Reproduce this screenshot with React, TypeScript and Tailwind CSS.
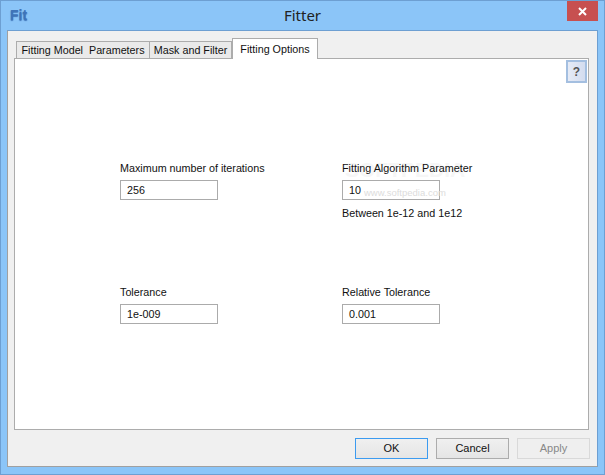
const font = { fontFamily: '"Liberation Sans", Arial, sans-serif' };

function Field({ label, value, hint }: { label: string; value: string; hint?: string }) {
  return (
    <div className="flex flex-col relative z-10">
      <div className="h-[18px] leading-[18px] text-[10.75px] text-[#111]">{label}</div>
      <div className="mt-[3px] w-[98px] h-[20px] border border-[#ababab] bg-white pl-[6px] leading-[18px] text-[10.75px] text-[#111]">{value}</div>
      {hint && <div className="mt-[4px] h-[18px] leading-[18px] text-[10.75px] text-[#111]">{hint}</div>}
    </div>
  );
}

function Btn({ children, kind }: { children: string; kind: "ok" | "normal" | "off" }) {
  const cls =
    kind === "ok"
      ? "border-[#3c9bf0] bg-gradient-to-b from-[#f0f0f0] to-[#e5e5e5] text-[#111]"
      : kind === "normal"
      ? "border-[#acacac] bg-gradient-to-b from-[#f0f0f0] to-[#e5e5e5] text-[#111]"
      : "border-[#d9d9d9] bg-[#efefef] text-[#888]";
  return (
    <div className={`w-[73px] h-[21px] border flex items-center justify-center text-[11px] ${cls}`}>{children}</div>
  );
}

export default function App() {
  return (
    <div style={font} className="w-[605px] h-[475px] flex flex-col bg-[#8bc5f8] border border-[#6d9fd2] overflow-hidden">
      <div className="h-[29px] shrink-0 relative flex items-center justify-center">
        <span className="absolute left-[9px] top-[6px] text-[14px] leading-[17px] font-bold text-[#3f74b8] [text-shadow:0_1px_1px_#3f74b8]">Fit</span>
        <span className="text-[15px] text-[#222] [font-family:'Noto_Sans']">Fitter</span>
        <div className="absolute right-[6px] top-0 w-[31px] h-[20px] bg-[#c75050] flex items-center justify-center">
          <svg width="9" height="9" viewBox="0 0 9 9">
            <path d="M1 1 L8 8 M8 1 L1 8" stroke="#fff" strokeWidth="2" fill="none" />
          </svg>
        </div>
      </div>
      <div className="mx-[6px] mb-[7px] flex-1 bg-[#f0f0f0] border border-[#a0a0a0] border-t-[#6d9fd2] border-r-[#6d9fd2] flex flex-col px-[6px] pt-[7px]">
        <div className="flex items-end h-[21px] pl-[2px] text-[10.75px] text-[#111] relative z-10 -mb-px">
          <div className="h-[18px] w-[134px] border border-[#acacac] bg-[#eaeaea] flex items-center justify-center whitespace-pre">Fitting Model  Parameters</div>
          <div className="h-[18px] w-[82px] border border-l-0 border-[#acacac] bg-[#eaeaea] flex items-center justify-center whitespace-nowrap">Mask and Filter</div>
          <div className="h-[21px] w-[86px] border border-b-0 border-[#acacac] bg-white flex items-start justify-center pt-[2px] whitespace-nowrap">Fitting Options</div>
        </div>
        <div className="h-[372px] w-[575px] bg-white border border-[#acacac] relative flex flex-col">
          <div className="flex justify-end pt-[1px] pr-[1px] h-[100px]">
            <div className="w-[21px] h-[23px] border-2 border-[#a4bfe0] bg-gradient-to-r from-[#e6ebf6] to-[#d3dcef] flex items-center justify-center text-[12px] font-bold text-[#555]">?</div>
          </div>
          <div className="grid grid-cols-[222px_222px] pl-[105px] gap-y-[61px]">
            <Field label="Maximum number of iterations" value="256" />
            <Field label="Fitting Algorithm Parameter" value="10" hint="Between 1e-12 and 1e12" />
            <Field label="Tolerance" value="1e-009" />
            <Field label="Relative Tolerance" value="0.001" />
          </div>
          <span className="absolute left-[330px] top-[101px] text-[21px] leading-[20px] font-bold text-[#f6f6f6] whitespace-nowrap">SOFTPEDIA</span>
          <span className="absolute z-20 left-[349px] top-[128px] text-[9.5px] leading-[12px] text-[#dcdcdc] whitespace-nowrap">www.softpedia.com</span>
        </div>
        <div className="flex justify-end gap-[8px] pt-[8px] pr-[1px]">
          <Btn kind="ok">OK</Btn>
          <Btn kind="normal">Cancel</Btn>
          <Btn kind="off">Apply</Btn>
        </div>
      </div>
    </div>
  );
}
